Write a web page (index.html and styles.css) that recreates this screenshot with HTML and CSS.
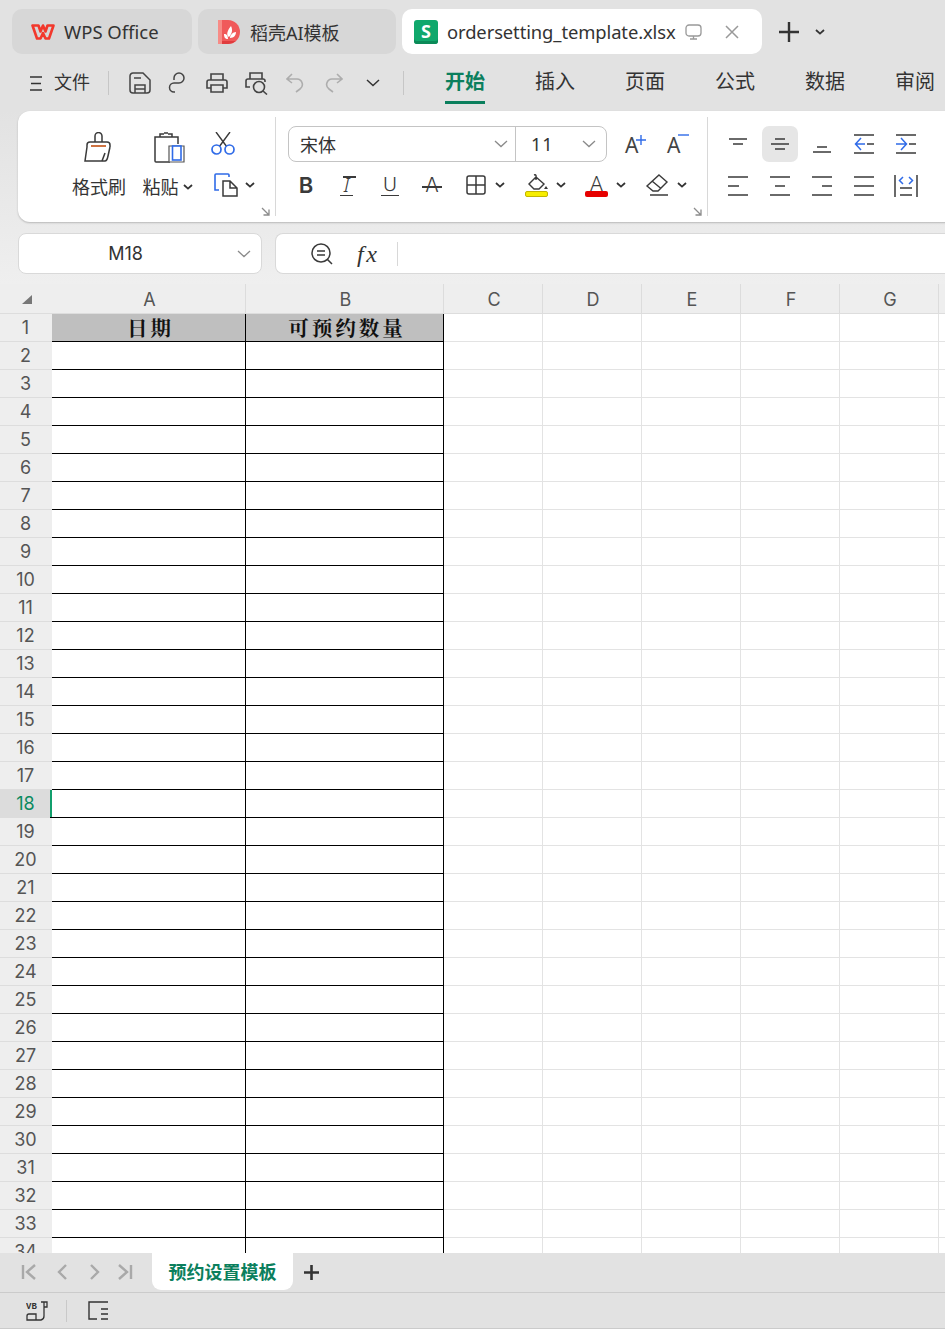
FILE: index.html
```html
<!DOCTYPE html>
<html lang="zh-CN">
<head>
<meta charset="utf-8">
<title>ordersetting_template.xlsx</title>
<link rel="stylesheet" href="styles.css">
</head>
<body>
<svg class="defs" width="0" height="0" aria-hidden="true">
  <symbol id="chev" viewBox="0 0 10 6"><path d="M1 1l4 3.600L9 1" fill="none" stroke="#333" stroke-width="1.800"/></symbol>
  <symbol id="sel" viewBox="0 0 14 8"><path d="M1 1l6 5.600L13 1" fill="none" stroke="#8a8a8a" stroke-width="1.300"/></symbol>
  <symbol id="corner" viewBox="0 0 9 9"><path d="M1 1l6.500 6.500M8 2.500V8H2.500" fill="none" stroke="#8c8c8c" stroke-width="1.300"/></symbol>
</svg>

<header class="tabs">
  <div class="tab tab-wps">
    <svg class="logo" width="24" height="16" viewBox="0 0 24 16"><path d="M1.500 1.500h6l2 6 2.500-6 2.500 6 2-6h6l-4.500 13h-3.500L12 9l-2.500 5.500H6z" fill="none" stroke="#f2382c" stroke-width="2.600" stroke-linejoin="round"/></svg>
    <span>WPS Office</span>
  </div>
  <div class="tab tab-ai">
    <svg class="logo" width="22" height="24" viewBox="0 0 22 24"><path d="M0 2a2 2 0 0 1 2-2h8a12 12 0 0 1 0 24H2a2 2 0 0 1-2-2z" fill="#f0595a"/><path d="M0 21h18a12 12 0 0 1-8 3H2a2 2 0 0 1-2-2z" fill="#e03c3e"/><rect width="4" height="24" fill="#f78b86"/><path d="M11 17c-3-2-2-6 2-11 2 4 1 8-2 11zM12 18c0-3 3-6 6-6 0 3-2 6-6 6zM10 19c-3 0-4-2-4-5 3 0 4 2 4 5z" fill="#fff"/></svg>
    <span>稻壳AI模板</span>
  </div>
  <div class="tab tab-file">
    <div class="s-logo">S</div>
    <span class="file-name">ordersetting_template.xlsx</span>
    <svg class="tab-monitor" width="18" height="16" viewBox="0 0 18 16"><rect x="1" y="1" width="15" height="11" rx="3" fill="none" stroke="#999" stroke-width="1.300"/><path d="M5 15h7M8.500 12v3" stroke="#999" stroke-width="1.300"/></svg>
    <svg class="tab-close" width="14" height="14" viewBox="0 0 14 14"><path d="M1 1l12 12M13 1L1 13" stroke="#999" stroke-width="1.500"/></svg>
  </div>
  <svg class="tab-plus" width="22" height="22" viewBox="0 0 22 22"><path d="M11 1v20M1 11h20" stroke="#333" stroke-width="2.400"/></svg>
  <svg class="tab-more" width="10" height="6"><use href="#chev"/></svg>
</header>

<nav class="menu">
  <div class="file-menu">
    <svg width="12" height="15" viewBox="0 0 12 15"><path d="M0 1h12M1 7.500h10M0 14h12" stroke="#333" stroke-width="1.400"/></svg>
    <span>文件</span>
  </div>
  <div class="vsep"></div>
  <div class="quick">
    <svg class="q-save" width="22" height="22" viewBox="0 0 22 22"><path d="M4 1h10l7 7v10a3 3 0 0 1-3 3H4a3 3 0 0 1-3-3V4a3 3 0 0 1 3-3zM5 6h7M6 21v-8h10v8M6 17h10" fill="none" stroke="#444" stroke-width="1.500"/></svg>
    <svg class="q-link" width="20" height="22" viewBox="0 0 20 22"><path d="M6 8V6a5 5 0 1 1 5 5H6a4.500 4.500 0 0 0 0 9h1" fill="none" stroke="#444" stroke-width="1.500"/></svg>
    <svg class="q-print" width="22" height="20" viewBox="0 0 22 20"><path d="M5 7V1h12v6M5 15H1V9a2 2 0 0 1 2-2h16a2 2 0 0 1 2 2v6h-4M5 12h12v7H5z" fill="none" stroke="#444" stroke-width="1.600"/></svg>
    <svg class="q-preview" width="24" height="23" viewBox="0 0 24 23"><path d="M5 7V1h12v6M5 15H1V9a2 2 0 0 1 2-2h15a2 2 0 0 1 2 2v1" fill="none" stroke="#444" stroke-width="1.600"/><circle cx="14" cy="15" r="5.500" fill="none" stroke="#444" stroke-width="1.600"/><path d="M18 19l4 3.500" stroke="#444" stroke-width="1.600"/></svg>
    <svg class="q-undo" width="18" height="20" viewBox="0 0 18 20"><path d="M6 1L1 6l5 4M1 6h10a5.500 5.500 0 0 1 3 10l-4 3" fill="none" stroke="#adadad" stroke-width="1.600"/></svg>
    <svg class="q-redo" width="18" height="20" viewBox="0 0 18 20"><path d="M12 1l5 5-5 4M17 6H7a5.500 5.500 0 0 0-3 10l4 3" fill="none" stroke="#adadad" stroke-width="1.600"/></svg>
    <svg class="q-more" width="14" height="8" viewBox="0 0 14 8"><path d="M1 1l6 5.500L13 1" fill="none" stroke="#333" stroke-width="1.500"/></svg>
  </div>
  <div class="vsep vsep-2"></div>
  <div class="ribbon-tabs">
    <span class="rt active">开始</span>
    <span class="rt">插入</span>
    <span class="rt">页面</span>
    <span class="rt">公式</span>
    <span class="rt">数据</span>
    <span class="rt">审阅</span>
  </div>
</nav>

<section class="ribbon">
  <div class="group group-clip">
    <div class="big-btn painter">
      <svg width="30" height="32" viewBox="0 0 30 32"><path d="M11 10V4a3.500 3.500 0 0 1 7 0v6M3 15v-2a3 3 0 0 1 3-3h17a3 3 0 0 1 3 3v2M3 15L1 29h20q2 0 3-5l2-9" fill="none" stroke="#3a3a3a" stroke-width="1.500"/><path d="M7 14h15" stroke="#c9622c" stroke-width="1.800"/><path d="M18 29l3-8" fill="none" stroke="#3a3a3a" stroke-width="1.500"/></svg>
      <span>格式刷</span>
    </div>
    <div class="big-btn paste">
      <svg width="31" height="31" viewBox="0 0 31 31"><path d="M5 5H1v24a1 1 0 0 0 1 1h14M5 5h19v7M6 5V2h4M14 2h4v3" fill="none" stroke="#3a3a3a" stroke-width="1.500"/><path d="M10 1h4" stroke="#3a3a3a" stroke-width="1.500"/><path d="M15 14h15v16H15z" fill="#fff" stroke="#555" stroke-width="1.200"/><rect x="18.500" y="14" width="8.500" height="14" fill="#fff" stroke="#2f6be8" stroke-width="1.600"/></svg>
      <span class="with-chev">粘贴<svg width="10" height="6"><use href="#chev"/></svg></span>
    </div>
    <div class="clip-col">
      <svg width="24" height="23" viewBox="0 0 24 23"><path d="M5 0l11 15M19 0L8 15" stroke="#3a3a3a" stroke-width="1.400"/><circle cx="5.500" cy="17.500" r="4.500" fill="#fff" stroke="#2f6be8" stroke-width="1.700"/><circle cx="18.500" cy="17.500" r="4.500" fill="#fff" stroke="#2f6be8" stroke-width="1.700"/></svg>
      <span class="split">
        <svg width="24" height="24" viewBox="0 0 24 24"><path d="M8 1H2a1 1 0 0 0-1 1v15h4M8 1h6a1 1 0 0 1 1 1v2" fill="none" stroke="#2f6be8" stroke-width="1.600"/><path d="M9 8h7l7 7v8H9zM16 8v7h7" fill="#fff" stroke="#3a3a3a" stroke-width="1.500"/></svg>
        <svg width="10" height="6"><use href="#chev"/></svg>
      </span>
    </div>
    <svg class="corner" width="9" height="9"><use href="#corner"/></svg>
  </div>

  <div class="group group-font">
    <div class="font-top">
      <div class="font-box">
        <div class="font-name"><span>宋体</span><svg width="14" height="8"><use href="#sel"/></svg></div>
        <div class="font-size"><span>11</span><svg width="14" height="8"><use href="#sel"/></svg></div>
      </div>
      <div class="grow"><span class="big-a">A</span><svg width="10" height="10" viewBox="0 0 10 10"><path d="M5 0v10M0 5h10" stroke="#2f6be8" stroke-width="1.400"/></svg></div>
      <div class="grow"><span class="big-a">A</span><svg class="minus" width="11" height="2"><path d="M0 1h11" stroke="#2f6be8" stroke-width="1.400"/></svg></div>
    </div>
    <div class="font-bottom">
      <div class="fmt"><span class="g-b">B</span></div>
      <div class="fmt"><span class="g-i">I</span></div>
      <div class="fmt"><span class="g-u">U</span></div>
      <div class="fmt"><span class="g-s">A</span></div>
      <div class="splits">
        <span class="split">
          <svg width="20" height="20" viewBox="0 0 20 20"><rect x="1" y="1" width="18" height="18" rx="2" fill="none" stroke="#3a3a3a" stroke-width="1.500"/><path d="M10 1v18M1 10h18" stroke="#3a3a3a" stroke-width="1.500"/></svg>
          <svg width="10" height="6"><use href="#chev"/></svg>
        </span>
        <span class="split">
          <span class="color-icon">
            <svg width="22" height="17" viewBox="0 0 22 17"><path d="M10 3l8 7-5 5H8l-5-5zM8 1c3-1 2 2 2 5" fill="none" stroke="#3a3a3a" stroke-width="1.400"/><path d="M20 12l-2 3h4z" fill="#3a3a3a"/></svg>
            <i class="swatch yellow"></i>
          </span>
          <svg width="10" height="6"><use href="#chev"/></svg>
        </span>
        <span class="split">
          <span class="color-icon">
            <span class="color-a">A</span>
            <i class="swatch red"></i>
          </span>
          <svg width="10" height="6"><use href="#chev"/></svg>
        </span>
        <span class="split">
          <svg width="24" height="22" viewBox="0 0 24 22"><path d="M14 1l8 7-9 9H8L2 12zM7 7l9 7.500" fill="none" stroke="#3a3a3a" stroke-width="1.400"/><path d="M5 21h18" stroke="#3a3a3a" stroke-width="1.500"/></svg>
          <svg width="10" height="6"><use href="#chev"/></svg>
        </span>
      </div>
    </div>
    <svg class="corner" width="9" height="9"><use href="#corner"/></svg>
  </div>

  <div class="group group-align">
    <div class="al"><svg width="20" height="20" viewBox="0 0 20 20"><path d="M1 5h18M5 10h10" stroke="#3a3a3a" stroke-width="1.500"/></svg></div>
    <div class="al on"><svg width="20" height="20" viewBox="0 0 20 20"><path d="M5 5h10M1 10h18M5 15h10" stroke="#3a3a3a" stroke-width="1.500"/></svg></div>
    <div class="al"><svg width="20" height="20" viewBox="0 0 20 20"><path d="M5 13h10M1 18h18" stroke="#3a3a3a" stroke-width="1.500"/></svg></div>
    <div class="al"><svg width="20" height="20" viewBox="0 0 20 20"><path d="M0 1h20M0 19h20M13 10h7" stroke="#3a3a3a" stroke-width="1.500"/><path d="M7 4l-5.500 6L7 16M2 10h9" fill="none" stroke="#2f6be8" stroke-width="1.500"/></svg></div>
    <div class="al"><svg width="20" height="20" viewBox="0 0 20 20"><path d="M0 1h20M0 19h20M13 10h7" stroke="#3a3a3a" stroke-width="1.500"/><path d="M5 4l5.500 6L5 16M10 10H0" fill="none" stroke="#2f6be8" stroke-width="1.500"/></svg></div>
    <div class="al"><svg width="20" height="20" viewBox="0 0 20 20"><path d="M0 1h20M0 10h11M0 19h20" stroke="#3a3a3a" stroke-width="1.500"/></svg></div>
    <div class="al"><svg width="20" height="20" viewBox="0 0 20 20"><path d="M0 1h20M5 10h10M0 19h20" stroke="#3a3a3a" stroke-width="1.500"/></svg></div>
    <div class="al"><svg width="20" height="20" viewBox="0 0 20 20"><path d="M0 1h20M10 10h10M0 19h20" stroke="#3a3a3a" stroke-width="1.500"/></svg></div>
    <div class="al"><svg width="20" height="20" viewBox="0 0 20 20"><path d="M0 1h20M0 10h20M0 19h20" stroke="#3a3a3a" stroke-width="1.500"/></svg></div>
    <div class="al"><svg width="24" height="22" viewBox="0 0 24 22"><path d="M1 0v22M23 0v22M6 13h12M6 20h12" stroke="#3a3a3a" stroke-width="1.500"/><path d="M9 2L5.500 5.500 9 9M15 2l3.500 3.500L15 9" fill="none" stroke="#2f6be8" stroke-width="1.500"/></svg></div>
  </div>
</section>

<section class="formula">
  <div class="name-box"><span>M18</span><svg width="14" height="8"><use href="#sel"/></svg></div>
  <div class="formula-box">
    <svg width="22" height="22" viewBox="0 0 22 22"><circle cx="10" cy="10" r="9" fill="none" stroke="#3a3a3a" stroke-width="1.500"/><path d="M6 8h8M6 12h8M16.500 16.500L21 21" stroke="#3a3a3a" stroke-width="1.500"/></svg>
    <span class="fx">fx</span>
    <div class="fx-sep"></div>
  </div>
</section>

<main class="sheet">
  <div class="col-head">
    <div class="corner-cell"><i></i></div>
    <div class="ch ch-a">A</div>
    <div class="ch ch-b">B</div>
    <div class="ch">C</div>
    <div class="ch">D</div>
    <div class="ch">E</div>
    <div class="ch">F</div>
    <div class="ch">G</div>
    <div class="ch"></div>
  </div>
  <div class="row row-title"><div class="rh">1</div><div class="ca">日期</div><div class="cb">可预约数量</div><div class="rest"></div></div>
  <div class="row"><div class="rh">2</div><div class="ca"></div><div class="cb"></div><div class="rest"></div></div>
  <div class="row"><div class="rh">3</div><div class="ca"></div><div class="cb"></div><div class="rest"></div></div>
  <div class="row"><div class="rh">4</div><div class="ca"></div><div class="cb"></div><div class="rest"></div></div>
  <div class="row"><div class="rh">5</div><div class="ca"></div><div class="cb"></div><div class="rest"></div></div>
  <div class="row"><div class="rh">6</div><div class="ca"></div><div class="cb"></div><div class="rest"></div></div>
  <div class="row"><div class="rh">7</div><div class="ca"></div><div class="cb"></div><div class="rest"></div></div>
  <div class="row"><div class="rh">8</div><div class="ca"></div><div class="cb"></div><div class="rest"></div></div>
  <div class="row"><div class="rh">9</div><div class="ca"></div><div class="cb"></div><div class="rest"></div></div>
  <div class="row"><div class="rh">10</div><div class="ca"></div><div class="cb"></div><div class="rest"></div></div>
  <div class="row"><div class="rh">11</div><div class="ca"></div><div class="cb"></div><div class="rest"></div></div>
  <div class="row"><div class="rh">12</div><div class="ca"></div><div class="cb"></div><div class="rest"></div></div>
  <div class="row"><div class="rh">13</div><div class="ca"></div><div class="cb"></div><div class="rest"></div></div>
  <div class="row"><div class="rh">14</div><div class="ca"></div><div class="cb"></div><div class="rest"></div></div>
  <div class="row"><div class="rh">15</div><div class="ca"></div><div class="cb"></div><div class="rest"></div></div>
  <div class="row"><div class="rh">16</div><div class="ca"></div><div class="cb"></div><div class="rest"></div></div>
  <div class="row"><div class="rh">17</div><div class="ca"></div><div class="cb"></div><div class="rest"></div></div>
  <div class="row row-current"><div class="rh">18</div><div class="ca"></div><div class="cb"></div><div class="rest"></div></div>
  <div class="row"><div class="rh">19</div><div class="ca"></div><div class="cb"></div><div class="rest"></div></div>
  <div class="row"><div class="rh">20</div><div class="ca"></div><div class="cb"></div><div class="rest"></div></div>
  <div class="row"><div class="rh">21</div><div class="ca"></div><div class="cb"></div><div class="rest"></div></div>
  <div class="row"><div class="rh">22</div><div class="ca"></div><div class="cb"></div><div class="rest"></div></div>
  <div class="row"><div class="rh">23</div><div class="ca"></div><div class="cb"></div><div class="rest"></div></div>
  <div class="row"><div class="rh">24</div><div class="ca"></div><div class="cb"></div><div class="rest"></div></div>
  <div class="row"><div class="rh">25</div><div class="ca"></div><div class="cb"></div><div class="rest"></div></div>
  <div class="row"><div class="rh">26</div><div class="ca"></div><div class="cb"></div><div class="rest"></div></div>
  <div class="row"><div class="rh">27</div><div class="ca"></div><div class="cb"></div><div class="rest"></div></div>
  <div class="row"><div class="rh">28</div><div class="ca"></div><div class="cb"></div><div class="rest"></div></div>
  <div class="row"><div class="rh">29</div><div class="ca"></div><div class="cb"></div><div class="rest"></div></div>
  <div class="row"><div class="rh">30</div><div class="ca"></div><div class="cb"></div><div class="rest"></div></div>
  <div class="row"><div class="rh">31</div><div class="ca"></div><div class="cb"></div><div class="rest"></div></div>
  <div class="row"><div class="rh">32</div><div class="ca"></div><div class="cb"></div><div class="rest"></div></div>
  <div class="row"><div class="rh">33</div><div class="ca"></div><div class="cb"></div><div class="rest"></div></div>
  <div class="row"><div class="rh">34</div><div class="ca"></div><div class="cb"></div><div class="rest"></div></div>
</main>

<footer class="sheet-bar">
  <div class="sheet-nav">
    <svg width="16" height="16" viewBox="0 0 16 16"><path d="M2 1v14M14 1L6 8l8 7" fill="none" stroke="#a9a9a9" stroke-width="2.400"/></svg>
    <svg width="10" height="16" viewBox="0 0 10 16"><path d="M9 1L2 8l7 7" fill="none" stroke="#a9a9a9" stroke-width="2.400"/></svg>
    <svg width="10" height="16" viewBox="0 0 10 16"><path d="M1 1l7 7-7 7" fill="none" stroke="#a9a9a9" stroke-width="2.400"/></svg>
    <svg width="16" height="16" viewBox="0 0 16 16"><path d="M14 1v14M2 1l8 7-8 7" fill="none" stroke="#a9a9a9" stroke-width="2.400"/></svg>
  </div>
  <div class="sheet-tab">预约设置模板</div>
  <svg class="sheet-add" width="15" height="15" viewBox="0 0 15 15"><path d="M7.500 0v15M0 7.500h15" stroke="#333" stroke-width="2.600"/></svg>
</footer>
<footer class="status">
  <svg width="22" height="20" viewBox="0 0 22 20"><text class="vb" x="0" y="8">VB</text><path d="M15 1h6v5h-3M18 1v14a4 4 0 0 1-3 4H1v-4a2 2 0 0 1 2-2h7v6M3 13h7" fill="none" stroke="#333" stroke-width="1.300"/></svg>
  <div class="status-sep"></div>
  <svg width="20" height="19" viewBox="0 0 20 19"><path d="M20 1H1v17h8M13 8h7M13 13h7M13 18h7" fill="none" stroke="#333" stroke-width="1.400"/></svg>
</footer>
</body>
</html>
```

FILE: styles.css
```css
* { box-sizing: border-box; }
html, body { margin: 0; padding: 0; }
body {
  width: 945px;
  height: 1329px;
  overflow: hidden;
  display: flex;
  flex-direction: column;
  background: linear-gradient(#e2e2e2 0, #e2e2e2 110px, #efefef 284px);
  color: #333;
  font-family: "Noto Sans", "Noto Sans CJK SC", sans-serif;
  font-size: 18px;
}
.defs { position: absolute; }
svg { display: block; flex: none; }

/* title tabs */
.tabs {
  flex: none;
  height: 54px;
  padding: 9px 0 0 12px;
  display: flex;
  gap: 6px;
  align-items: stretch;
}
.tab {
  display: flex;
  align-items: center;
  border-radius: 10px;
  background: #d7d7d7;
  font-size: 18.500px;
  white-space: nowrap;
}
.tab-wps { width: 180px; padding-left: 19px; gap: 9px; }
.tab-ai { width: 198px; padding-left: 20px; gap: 10px; font-size: 18px; }
.tab-file { width: 360px; padding-left: 12px; background: #fff; color: #333; }
.s-logo {
  width: 24px;
  height: 24px;
  border-radius: 3px;
  background: #10a86c;
  box-shadow: inset 0 -3px 0 #0b8a58;
  color: #fff;
  font: bold 18px/23px "Open Sans", sans-serif;
  text-align: center;
}
.file-name { margin-left: 9px; font-size: 18.400px; letter-spacing: -0.100px; }
.tab-monitor { margin-left: 9px; }
.tab-close { margin-left: 22px; }
.tab-plus { margin: 12px 0 0 10px; }
.tab-more { margin: 20px 0 0 9px; }

/* menu row */
.menu {
  flex: none;
  height: 42px;
  margin-top: 8px;
  display: flex;
  align-items: center;
  padding-left: 30px;
}
.file-menu { display: flex; align-items: center; gap: 12px; font-size: 18px; width: 78px; }
.file-menu span { line-height: 24px; margin-top: -2px; }
.vsep { width: 1px; height: 24px; background: #c6c6c6; }
.quick { width: 294px; display: flex; align-items: center; padding-left: 20px; }
.q-save { margin-right: 17px; }
.q-link { margin-right: 18px; }
.q-print { margin-right: 17px; }
.q-preview { margin-right: 17px; }
.q-undo { margin-right: 21px; }
.q-redo { margin-right: 23px; }
.ribbon-tabs { display: flex; gap: 50px; margin-left: 41px; height: 100%; white-space: nowrap; }
.rt { font-size: 20px; line-height: 40px; height: 42px; width: 40px; }
.rt.active { color: #0b7f5d; font-weight: 700; border-bottom: 3px solid #0b7f5d; }

/* ribbon */
.ribbon {
  flex: none;
  height: 111px;
  margin: 7px -40px 0 18px;
  background: #fff;
  border-radius: 12px;
  box-shadow: 0 1px 2px rgba(0, 0, 0, .22);
  display: flex;
  padding: 6px 0;
}
.group { position: relative; height: 100%; border-right: 1px solid #d8d8d8; }
.group .corner { position: absolute; right: 5px; bottom: 0; }
.group-clip { width: 258px; display: flex; padding: 15px 0 0 54px; }
.big-btn { display: flex; flex-direction: column; align-items: center; font-size: 18px; color: #333; }
.big-btn > span { line-height: 24px; }
.painter { width: 54px; gap: 11px; }
.paste { width: 49px; margin-left: 17px; gap: 12px; }
.paste > svg { margin-left: 4px; }
.with-chev { display: flex; align-items: center; gap: 4px; white-space: nowrap; }
.clip-col { margin-left: 19px; display: flex; flex-direction: column; gap: 18px; }
.split { display: inline-flex; align-items: center; gap: 7px; }
.clip-col .split { margin-left: 3px; }

.group-font { width: 432px; padding: 9px 0 0 12px; }
.font-top { display: flex; align-items: center; }
.font-box {
  width: 319px;
  height: 36px;
  display: flex;
  border: 1px solid #c4c4c4;
  border-radius: 8px;
}
.font-name {
  width: 227px;
  padding: 0 7px 0 11px;
  border-right: 1px solid #c4c4c4;
  display: flex;
  align-items: center;
  justify-content: space-between;
}
.font-size {
  flex: 1;
  padding: 0 10px 0 15px;
  display: flex;
  align-items: center;
  justify-content: space-between;
  font-size: 18px;
  letter-spacing: 1px;
}
.grow { width: 24px; height: 26px; display: flex; align-items: flex-start; margin-left: 18px; }
.big-a { font: 21px/26px "Noto Sans", sans-serif; color: #444; width: 11px; margin-top: 1px; }
.grow svg { margin-top: 4px; }
.grow .minus { margin-top: 3px; }

.font-bottom { display: flex; align-items: center; gap: 6px; margin-top: 11px; height: 24px; }
.fmt { width: 36px; display: flex; justify-content: center; color: #3a3a3a; font-family: "Inter", sans-serif; }
.g-b { font-weight: 600; font-size: 22px; line-height: 24px; }
.g-i {
  position: relative;
  font: italic 300 20px/21px "Noto Sans", sans-serif;
  border-bottom: 1.500px solid #3a3a3a;
  width: 13px;
  margin-right: 3px;
  text-align: center;
}
.g-i::before { content: ""; position: absolute; left: 3px; width: 13px; top: 2px; height: 1.500px; background: #3a3a3a; }
.g-u { font-size: 19px; line-height: 20px; font-weight: 300; border-bottom: 1.500px solid #3a3a3a; width: 18px; text-align: center; }
.g-s { position: relative; font-size: 20px; line-height: 24px; width: 20px; text-align: center; font-weight: 300; }
.g-s::after { content: ""; position: absolute; left: 0; right: 0; top: 13px; height: 1.500px; background: #3a3a3a; }
.splits { display: flex; gap: 19px; margin-left: 10px; align-items: center; }
.splits .split { gap: 8px; }
.splits .split:first-child { gap: 9px; margin-right: 1px; }
.color-icon { display: flex; flex-direction: column; align-items: center; width: 23px; }
.color-a { font-size: 22px; line-height: 18px; height: 17px; color: #3a3a3a; font-weight: 300; }
.swatch { display: block; width: 23px; height: 6px; border-radius: 2px; margin-top: 0; }
.swatch.yellow { background: #f7ee00; border: 1px solid #c3b500; }
.swatch.red { background: #e60000; }

.group-align {
  width: 220px;
  border-right: 0;
  padding: 9px 0 0 12px;
  display: grid;
  grid-template-columns: repeat(5, 36px);
  grid-auto-rows: 36px;
  column-gap: 6px;
  row-gap: 6px;
  align-content: start;
}
.al { display: flex; align-items: center; justify-content: center; border-radius: 7px; }
.al.on { background: #e6e6e6; }

/* formula row */
.formula {
  flex: none;
  height: 41px;
  margin: 11px 0 0 18px;
  display: flex;
  gap: 13px;
}
.name-box, .formula-box {
  background: #fff;
  border: 1px solid #d9d9d9;
  border-radius: 8px;
  display: flex;
  align-items: center;
}
.name-box { width: 244px; padding: 0 10px 0 0; justify-content: flex-end; gap: 94px; }
.name-box span { font: 18px "Inter", sans-serif; color: #333; }
.formula-box { flex: 1; padding-left: 35px; border-right: 0; border-radius: 8px 0 0 8px; }
.fx { font: italic 24px/1 "Liberation Serif", serif; margin-left: 24px; width: 40px; letter-spacing: 2.500px; }
.fx-sep { width: 1px; height: 24px; background: #d8d8d8; }

/* grid */
.sheet {
  flex: 1;
  min-height: 0;
  margin-top: 10px;
  overflow: hidden;
  font-family: "Inter", "Noto Sans", sans-serif;
}
.col-head { display: flex; height: 30px; background: #eee; border-bottom: 1px solid #ddd; }
.corner-cell { width: 52px; flex: none; position: relative; }
.corner-cell i {
  position: absolute;
  left: 22px;
  top: 11px;
  width: 0;
  height: 0;
  border-left: 10px solid transparent;
  border-bottom: 9px solid #777;
}
.ch {
  flex: none;
  width: 99px;
  border-right: 1px solid #dcdcdc;
  text-align: center;
  font-size: 18px;
  line-height: 29px;
  color: #555;
  padding: 1px 0 0 2px;
}
.ch-a { width: 194px; }
.ch-b { width: 198px; }
.row { display: flex; height: 28px; background: #fff; }
.rh {
  width: 52px;
  flex: none;
  padding-right: 1px;
  background: #eee;
  border-bottom: 1px solid #ddd;
  color: #555;
  text-align: center;
  font-size: 18px;
  line-height: 27px;
}
.ca, .cb {
  flex: none;
  border-right: 1px solid #000;
  border-bottom: 1px solid #000;
  text-align: center;
  color: #111;
  font-family: "Noto Serif CJK SC", "Noto Sans CJK SC", serif;
  font-weight: 700;
  font-size: 20.500px;
  line-height: 27px;
  letter-spacing: 3px;
}
.ca { width: 194px; padding-left: 4px; }
.cb { width: 198px; padding-left: 5px; }
.rest {
  flex: 1;
  border-bottom: 1px solid #e3e3e3;
  background: repeating-linear-gradient(to right, transparent 0, transparent 98px, #e3e3e3 98px, #e3e3e3 99px);
}
.row-title .ca, .row-title .cb { background: #bfbfbf; }
.row-current .rh { background: #dcdcdc; color: #0b8a60; border-bottom-color: #dcdcdc; }
.row-current .ca { box-shadow: inset 2px 0 0 #119e6c; margin-left: -2px; width: 196px; }

/* sheet bar */
.sheet-bar {
  flex: none;
  height: 40px;
  background: #e2e2e2;
  border-bottom: 1px solid #cbcbcb;
  display: flex;
  align-items: flex-start;
}
.sheet-nav { width: 152px; height: 38px; padding-left: 21px; display: flex; align-items: center; }
.sheet-nav svg:nth-child(2) { margin-left: 20px; }
.sheet-nav svg:nth-child(3) { margin-left: 23px; }
.sheet-nav svg:nth-child(4) { margin-left: 17px; }
.sheet-tab {
  width: 141px;
  height: 37px;
  background: #fff;
  border-radius: 0 0 9px 9px;
  color: #0b7f5d;
  font-weight: 700;
  font-size: 18px;
  line-height: 38px;
  text-align: center;
}
.sheet-add { margin: 12px 0 0 11px; }

/* status bar */
.status {
  flex: none;
  height: 36px;
  background: #e2e2e2;
  border-bottom: 1px solid #cbcbcb;
  display: flex;
  align-items: center;
  padding-left: 26px;
}
.status-sep { width: 1px; height: 22px; background: #c9c9c9; margin: 0 21px 0 18px; }
.vb { font: 700 9px "Liberation Mono", monospace; fill: #333; }
```
